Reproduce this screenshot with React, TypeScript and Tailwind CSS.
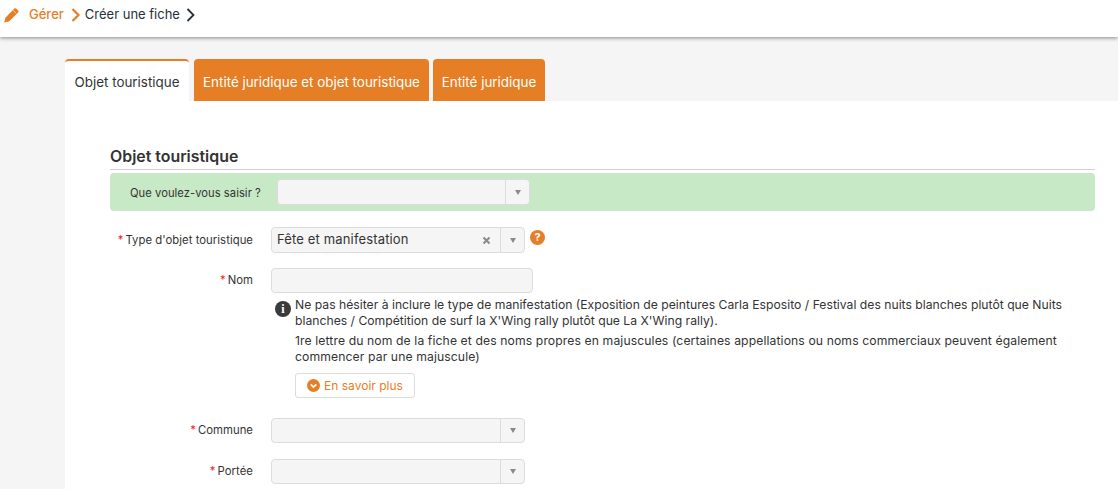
import React from "react";

function Arrow() {
  return (
    <svg width="6" height="5" viewBox="0 0 6 5" className="block">
      <path d="M0 0h6L3 5z" fill="#8a8a8a" />
    </svg>
  );
}

function Select({ w, value, clear }: { w: string; value?: string; clear?: boolean }) {
  return (
    <div className={`${w} flex items-center rounded-[4px] border border-[#dcdcdc] bg-[#f5f5f5]`}>
      <div className="flex-1 pl-[5px] text-[13px] tracking-[0.15px] text-[#333]">{value}</div>
      {clear && (
        <svg width="9" height="9" viewBox="0 0 9 9" className="mr-[9px]">
          <path d="M1.5 1.5l6 6M7.5 1.5l-6 6" stroke="#8a8a8a" strokeWidth="2" />
        </svg>
      )}
      <div className="flex h-full w-[24px] items-center justify-center border-l border-[#dcdcdc]">
        <Arrow />
      </div>
    </div>
  );
}

function Label({ children, h = "h-[26px]" }: { children: React.ReactNode; h?: string }) {
  return (
    <div className={`flex w-[143px] ${h} shrink-0 items-center justify-end text-[11.3px] tracking-[0.05px] text-[#333]`}>
      <span className="mr-[2px] text-[#e8202a]">*</span>
      {children}
    </div>
  );
}

export default function App() {
  return (
    <div className="h-[489px] w-[1118px] overflow-hidden bg-[#f5f5f5] font-['Inter',sans-serif] text-[#333]">
      <header className="flex h-[37px] items-center bg-white pl-[4px] pb-[8px] text-[13px] shadow-[0_1px_4px_rgba(0,0,0,0.45)]">
        <svg width="15" height="16" viewBox="0 0 15 16">
          <path d="M0.3 15.5l1.1-4.8L10.3 1.6a1.3 1.3 0 0 1 1.8 0l2 2a1.3 1.3 0 0 1 0 1.8L5 14.4z" fill="#e67e25" />
          <path d="M9 3.2l3.2 3.2" stroke="#fff" strokeWidth="0.7" />
        </svg>
        <span className="ml-[10px] font-medium text-[#e67e25]">Gérer</span>
        <svg width="10" height="14" viewBox="0 0 10 14" className="ml-[7px]">
          <path d="M1.5 1l6 6-6 6" fill="none" stroke="#e67e25" strokeWidth="2.2" />
        </svg>
        <span className="ml-[4px] text-[#26303a]">Créer une fiche</span>
        <svg width="10" height="14" viewBox="0 0 10 14" className="ml-[6px]">
          <path d="M1.5 1l6 6-6 6" fill="none" stroke="#26303a" strokeWidth="1.8" />
        </svg>
      </header>

      <nav className="ml-[65px] mt-[22px] flex h-[42px] text-[13.4px]">
        <div className="flex w-[124px] items-center justify-center rounded-t-[4px] border-t-2 border-[#e67e25] bg-white pt-[2px] text-[#333]">
          Objet touristique
        </div>
        <div className="ml-[5px] flex w-[235px] items-center justify-center rounded-t-[4px] bg-[#e67e25] pt-[4px] text-white">
          Entité juridique et objet touristique
        </div>
        <div className="ml-[4px] flex w-[112px] items-center justify-center rounded-t-[4px] bg-[#e67e25] pt-[4px] text-white">
          Entité juridique
        </div>
      </nav>

      <main className="ml-[65px] h-[400px] bg-white pl-[45px] pr-[23px] pt-[45px]">
        <h2 className="h-[24px] border-b border-[#d0d0d0] text-[15.9px] font-semibold leading-[21px] text-[#333]">
          Objet touristique
        </h2>
        <div className="mt-[3px] flex h-[38px] items-center rounded-[4px] bg-[#c8e9c6] pl-[20px]">
          <div className="w-[147px] pt-[2px] text-[11.2px] tracking-[0.05px] text-[#333]">Que voulez-vous saisir ?</div>
          <Select w="w-[253px] h-[26px]" />
        </div>

        <div className="mt-[16px] flex">
          <Label>Type d'objet touristique</Label>
          <div className="ml-[18px]">
            <Select w="w-[254px] h-[26px]" value="Fête et manifestation" clear />
          </div>
          <div className="ml-[5px] mt-[3px] flex h-[15px] w-[15px] items-center justify-center rounded-full bg-[#e67e25] text-[11px] font-bold text-white">
            ?
          </div>
        </div>

        <div className="mt-[15px] flex">
          <Label h="h-[25px]">Nom</Label>
          <div className="ml-[18px] w-[800px]">
            <div className="h-[25px] w-[262px] rounded-[4px] border border-[#dcdcdc] bg-[#f5f5f5]" />
            <div className="mt-[4px] flex text-[12.2px] leading-[16px] text-[#333]">
              <div className="ml-[4px] mt-[4px] flex h-[16px] w-[16px] shrink-0 items-center justify-center rounded-full bg-[#3a3a3a] font-['Liberation_Serif',serif] text-[12px] font-bold text-white">
                i
              </div>
              <div className="ml-[4px] w-[790px]">
                <p>
                  Ne pas hésiter à inclure le type de manifestation (Exposition de peintures Carla Esposito / Festival des nuits blanches plutôt que Nuits blanches / Compétition de surf la X'Wing rally plutôt que La X'Wing rally).
                </p>
                <p className="mt-[4px] tracking-[0.1px]">
                  1re lettre du nom de la fiche et des noms propres en majuscules (certaines appellations ou noms commerciaux peuvent également commencer par une majuscule)
                </p>
                <button className="mt-[8px] flex h-[25px] w-[120px] items-center justify-center rounded-[3px] border border-[#dcdcdc] bg-white text-[12px] text-[#e67e25]">
                  <svg width="13" height="13" viewBox="0 0 13 13" className="mr-[4px]">
                    <circle cx="6.5" cy="6.5" r="6.5" fill="#e67e25" />
                    <path d="M3.7 5.3l2.8 2.8 2.8-2.8" fill="none" stroke="#fff" strokeWidth="1.7" />
                  </svg>
                  En savoir plus
                </button>
              </div>
            </div>
          </div>
        </div>

        <div className="mt-[20px] flex">
          <Label h="h-[25px]">Commune</Label>
          <div className="ml-[18px]">
            <Select w="w-[254px] h-[25px]" />
          </div>
        </div>

        <div className="mt-[16px] flex">
          <Label h="h-[25px]">Portée</Label>
          <div className="ml-[18px]">
            <Select w="w-[254px] h-[25px]" />
          </div>
        </div>
      </main>
    </div>
  );
}
